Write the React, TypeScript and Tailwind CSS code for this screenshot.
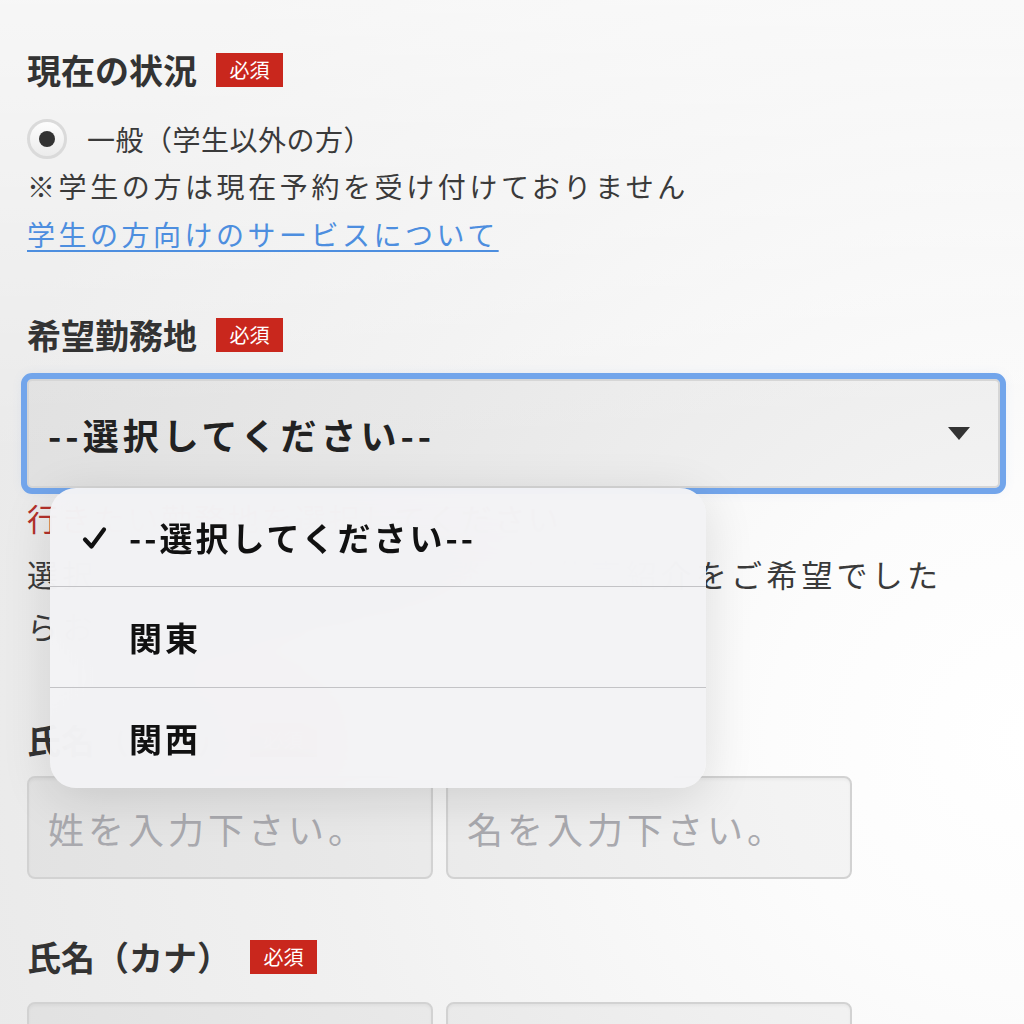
import React from 'react';

const Badge: React.FC<{ className?: string }> = ({ className = '' }) => (
  <span
    className={`inline-flex items-center justify-center w-[67px] h-[34px] bg-[#c9271d] text-white text-[20px] leading-none ${className}`}
  >
    必須
  </span>
);

const Heading: React.FC<{ label: string; className?: string }> = ({ label, className = '' }) => (
  <div className={`flex items-center h-[40px] ${className}`}>
    <h2 className="text-[34px] font-bold text-[#333] leading-none">{label}</h2>
    <Badge className="ml-[19px]" />
  </div>
);

const NameInputs: React.FC<{ first?: string; last?: string; className?: string }> = ({ first = '', last = '', className = '' }) => (
  <div className={`flex gap-[13px] ${className}`}>
    {[first, last].map((ph, i) => (
      <div
        key={i}
        className="w-[406px] h-[103px] rounded-[8px] border-2 border-[#d2d2d2] bg-black/[0.035] shadow-[inset_0_2px_3px_rgba(0,0,0,0.04)] flex items-center pl-[19px]"
      >
        <span className="text-[36px] tracking-[4px] text-[#a9a9ae] leading-none">{ph}</span>
      </div>
    ))}
  </div>
);

const options = ['--選択してください--', '関東', '関西'];

export default function App() {
  return (
    <div className="relative w-full h-[1024px] overflow-hidden bg-[linear-gradient(to_bottom,rgba(255,255,255,0.6),rgba(255,255,255,0)_45%),radial-gradient(circle_at_100%_72%,#ffffff_0%,#fcfcfc_20%,#f1f1f1_55%,#eaeaea_85%)] font-['Noto_Sans_CJK_JP','Noto_Sans',sans-serif] text-[#3a3a3a]">
      <div className="pl-[27px] pr-[24px] pt-[50px] w-full">
        <Heading label="現在の状況" />

        <div className="mt-[26px] h-[46px] flex items-center">
          <span className="w-[40px] h-[40px] rounded-full border-[3px] border-[#dadada] bg-gradient-to-b from-[#fdfdfd] to-[#ececec] flex items-center justify-center">
            <span className="w-[16px] h-[16px] rounded-full bg-[#333]" />
          </span>
          <span className="ml-[20px] text-[28px] tracking-[0.5px] leading-none text-[#3a3a3a]">一般（学生以外の方）</span>
        </div>

        <p className="text-[28px] tracking-[3.6px] leading-[48px] whitespace-nowrap">
          ※学生の方は現在予約を受け付けておりません
        </p>
        <a className="block w-fit text-[28px] tracking-[3.5px] leading-[48px] text-[#4d8edf] underline decoration-2 underline-offset-[4px] whitespace-nowrap">
          学生の方向けのサービスについて
        </a>

        <Heading label="希望勤務地" className="mt-[57px]" />

        <div className="mt-[24px] h-[109px] rounded-[5px] border-2 border-[#d6d6d6] outline-[6px] outline-solid outline-[#72a5eb] bg-black/[0.04] flex items-center justify-between pl-[19px] pr-[28px] shadow-[0_0_14px_rgba(90,140,220,0.25)]">
          <span className="text-[36px] tracking-[4px] font-bold text-[#222] leading-none">--選択してください--</span>
          <svg width="22" height="13" viewBox="0 0 22 13">
            <path d="M0 0 H22 L11 13 Z" fill="#333" />
          </svg>
        </div>

        <p className="mt-[5px] text-[31px] tracking-[2.5px] leading-[50px] text-[#b3312b] whitespace-nowrap">
          行きたい勤務地を選択してください
        </p>
        <p className="mt-[5px] text-[31px] tracking-[4.2px] leading-[52px] whitespace-nowrap">
          選択した勤務地以外での面談・お仕事紹介をご希望でした
          <br />
          らお問い合わせください。
        </p>

        <Heading label="氏名（漢字）" className="mt-[68px]" />
        <NameInputs first="姓を入力下さい。" last="名を入力下さい。" className="mt-[16px]" />

        <Heading label="氏名（カナ）" className="mt-[58px]" />
        <NameInputs className="mt-[25px]" />
      </div>

      <div className="absolute left-[50px] top-[488px] w-[656px] rounded-[26px] bg-[#f3f3f5]/[0.97] backdrop-blur-2xl shadow-[0_10px_50px_rgba(0,0,0,0.12)] overflow-hidden">
        {options.map((opt, i) => (
          <div
            key={opt}
            className={`relative flex items-center ${i === 0 ? 'h-[99px]' : i === 1 ? 'h-[101px]' : 'h-[100px]'} ${i < options.length - 1 ? 'border-b border-[#c3c3c6]' : ''}`}
          >
            {i === 0 && (
              <svg className="absolute left-[32px] top-[38px]" width="25" height="24" viewBox="0 0 25 24">
                <path d="M3 13.5 L9.5 20.5 L22 3.5" fill="none" stroke="#111" strokeWidth="4.2" strokeLinecap="round" strokeLinejoin="round" />
              </svg>
            )}
            <span className="ml-[79px] text-[33px] tracking-[3px] font-bold text-[#111] leading-none">{opt}</span>
          </div>
        ))}
      </div>
    </div>
  );
}
